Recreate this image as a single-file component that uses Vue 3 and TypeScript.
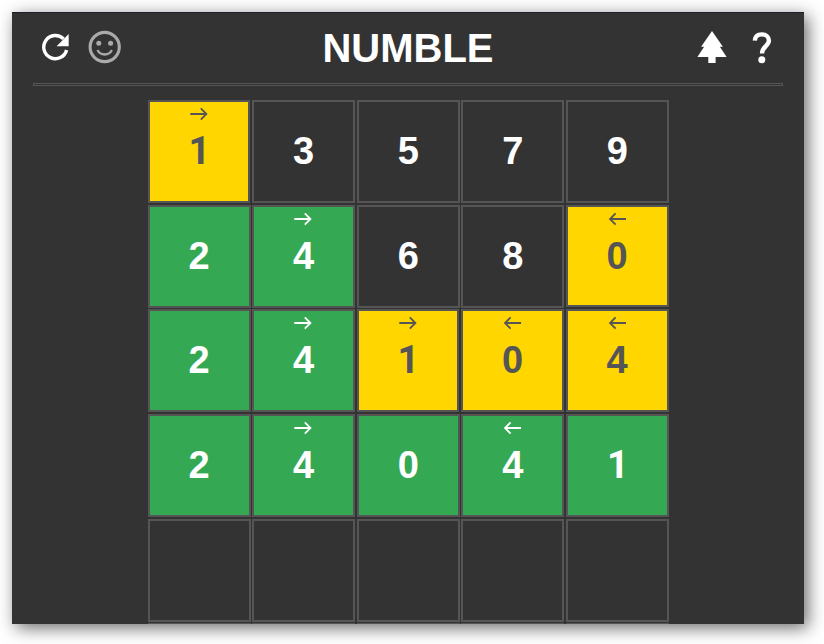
<script setup lang="ts">
type Tone = 'plain' | 'gold' | 'green'
type Arrow = 'left' | 'right' | null

interface Cell {
  digit: string
  tone: Tone
  arrow: Arrow
}

const cell = (digit: string, tone: Tone = 'plain', arrow: Arrow = null): Cell => ({ digit, tone, arrow })
const emptyRow = (): Cell[] => Array.from({ length: 5 }, () => cell(''))

const rows: Cell[][] = [
  [cell('1', 'gold', 'right'), cell('3'), cell('5'), cell('7'), cell('9')],
  [cell('2', 'green'), cell('4', 'green', 'right'), cell('6'), cell('8'), cell('0', 'gold', 'left')],
  [cell('2', 'green'), cell('4', 'green', 'right'), cell('1', 'gold', 'right'), cell('0', 'gold', 'left'), cell('4', 'gold', 'left')],
  [cell('2', 'green'), cell('4', 'green', 'right'), cell('0', 'green'), cell('4', 'green', 'left'), cell('1', 'green')],
  emptyRow(),
  emptyRow(),
]

const arrowPaths = {
  right: 'M0.3 7H16.4M10.8 1.4L16.4 7L10.8 12.6',
  left: 'M18 7H2M7.6 1.4L2 7L7.6 12.6',
}
</script>

<template>
  <div class="page">
    <main class="game">
      <header class="bar">
        <div class="tools">
          <svg class="icon" width="36" height="36" viewBox="0 0 36 36">
            <path d="M29.6 20A11.6 11.6 0 1 1 26.6 8.9" fill="none" stroke="#fff" stroke-width="3.4" />
            <path d="M31.7 4V16.2H19.6Z" fill="#fff" />
          </svg>
          <svg class="icon" width="36" height="36" viewBox="0 0 36 36">
            <circle cx="18.7" cy="17" r="14.6" fill="none" stroke="#aaa" stroke-width="3.1" />
            <circle cx="12.8" cy="13.2" r="2.5" fill="#aaa" />
            <circle cx="24.6" cy="13.2" r="2.5" fill="#aaa" />
            <path d="M11.5 20C14.4 26 23 26 25.9 20" fill="none" stroke="#aaa" stroke-width="2.3" />
          </svg>
        </div>
        <h1 class="title">NUMBLE</h1>
        <div class="tools">
          <svg class="icon" width="36" height="36" viewBox="0 0 36 36">
            <path d="M18 1L28.9 16.8H25.9L32.6 27H21.6V33H14.3V27H3.4L10.1 16.8H7.1Z" fill="#fff" />
          </svg>
          <svg class="icon" width="36" height="36" viewBox="0 0 36 36">
            <path d="M10.8 10.6C11.2 6.3 14 4.4 17.7 4.4C22 4.4 24.9 6.8 24.9 10.6C24.9 16 18 16.4 18 23.6" fill="none" stroke="#fff" stroke-width="4.4" />
            <circle cx="17.8" cy="29.8" r="3.5" fill="#fff" />
          </svg>
        </div>
      </header>
      <div class="rule"></div>
      <section class="board">
        <div v-for="(row, r) in rows" :key="r" class="row">
          <div v-for="(item, c) in row" :key="c" class="slot">
            <div class="cell" :class="item.tone">
              <svg v-if="item.arrow" class="arrow" width="19" height="14" viewBox="0 0 19 14">
                <path :d="arrowPaths[item.arrow]" fill="none" stroke="currentColor" stroke-width="1.8" />
              </svg>
              <span class="digit" :class="{ one: item.digit === '1' }">{{ item.digit }}</span>
            </div>
          </div>
        </div>
      </section>
    </main>
  </div>
</template>

<style>
body {
  background: #fff;
  overflow: hidden;
}
</style>

<style scoped>
.page {
  box-sizing: border-box;
  width: 824px;
  height: 644px;
  padding: 12px;
  overflow: hidden;
  font-family: Arial, 'Liberation Sans', sans-serif;
}

.game {
  box-sizing: border-box;
  width: 792px;
  height: 612px;
  background: #333;
  border-top: 1px solid #1e1e2a;
  box-shadow: 4px 4px 16px rgba(0, 0, 0, 0.58);
  display: flex;
  flex-direction: column;
}

.bar {
  height: 70px;
  flex: none;
  padding: 0 24px 0 25px;
  display: flex;
  align-items: center;
  justify-content: space-between;
}

.tools {
  display: flex;
  gap: 14px;
}

.icon {
  display: block;
}

.tools:first-child .icon + .icon {
  margin-left: -1px;
}

.title {
  margin: 0;
  color: #fff;
  font-size: 40px;
  line-height: 46px;
  font-weight: bold;
}

.rule {
  box-sizing: border-box;
  height: 3px;
  flex: none;
  margin: 0 21px;
  border: 1px solid #555;
}

.board {
  display: flex;
  flex-direction: column;
  gap: 1.6px;
  padding: 14.2px 0 0 135.8px;
  min-height: 0;
  overflow: hidden;
}

.row {
  display: flex;
  flex: none;
  gap: 1.55px;
}

.slot {
  width: 103px;
  height: 103px;
}

.cell {
  box-sizing: border-box;
  position: relative;
  width: 100%;
  height: 100%;
  border: 2px solid #555;
  color: #fff;
  display: flex;
  align-items: center;
  justify-content: center;
}

.green {
  background: #34a853;
}

.gold {
  width: 102.55px;
  height: 102.6px;
  background: #ffd600;
  color: #555;
}

.digit {
  padding: 0 0.4px 1px 0;
  font-size: 38px;
  line-height: 44px;
  font-weight: bold;
}

.gold .digit {
  padding-bottom: 0.6px;
}

.digit.one {
  padding-right: 0;
  padding-left: 0.6px;
  font-family: Roboto, 'Liberation Sans', sans-serif;
}

.arrow {
  position: absolute;
  top: 5px;
  left: 40px;
}
</style>
